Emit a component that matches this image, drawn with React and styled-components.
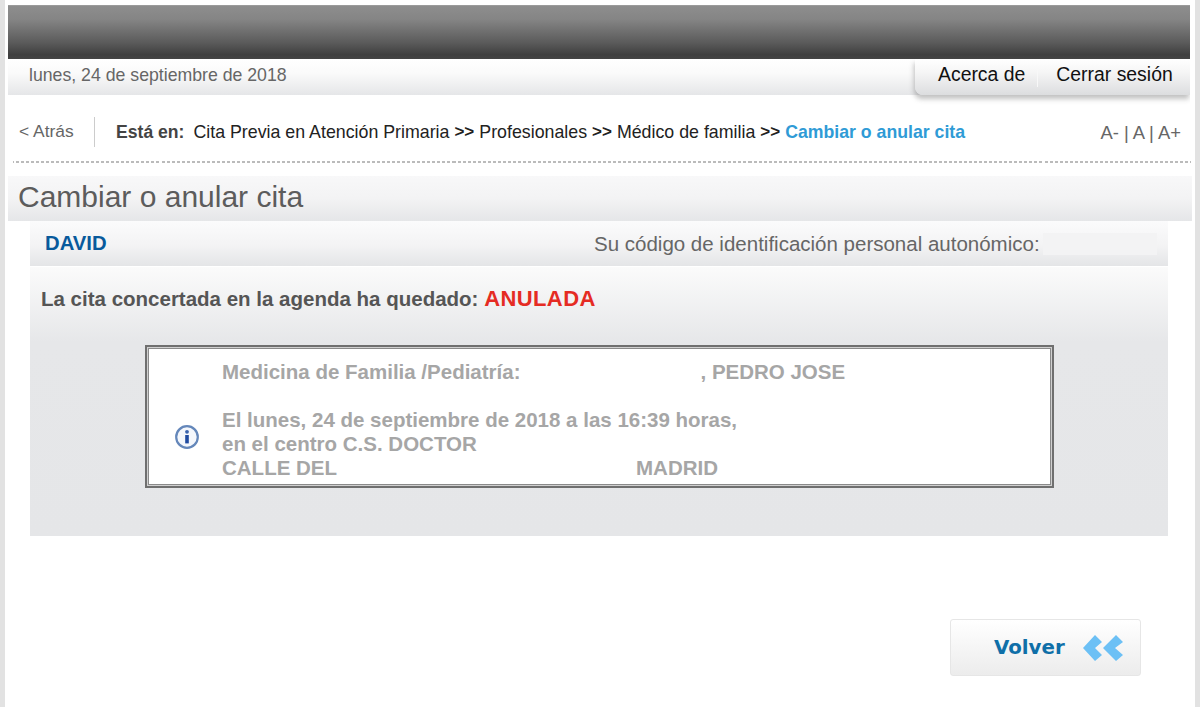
import React from 'react';
import styled, { createGlobalStyle } from 'styled-components';

const GlobalStyle = createGlobalStyle`
    html, body {
        margin: 0;
        padding: 0;
        background: #fff;
        font-family: "Liberation Sans", Arial, sans-serif;
    }
`;

const InfoIcon = () => (
    <svg width="26" height="26" viewBox="0 0 26 26">
        <circle cx="13" cy="13" r="10.8" fill="#f4f7fc" stroke="#6487ba" strokeWidth="2.2" />
        <circle cx="13" cy="7.8" r="1.9" fill="#3a63ad" />
        <rect x="11.2" y="11" width="3.6" height="8.4" fill="#1f4aa0" />
    </svg>
);

const BackArrows = () => (
    <svg width="42" height="28" viewBox="0 0 42 28">
        <polygon points="1,14 13,1 20,8 13,14 20,21 13,27" fill="#6cc0f5" />
        <polygon points="21,14 34,1 41,8 33,14 41,21 34,27" fill="#6cc0f5" />
    </svg>
);

const App = () => (
    <Frame>
        <GlobalStyle />
        <TopBar />
        <SubBar>
            <DateText>lunes, 24 de septiembre de 2018</DateText>
            <Tabs>
                <Tab $divider>Acerca de</Tab>
                <Tab>Cerrar sesión</Tab>
            </Tabs>
        </SubBar>
        <CrumbRow>
            <BackLink>&lt; Atrás</BackLink>
            <Crumbs>
                <CrumbLabel>Está en:</CrumbLabel>
                <span>Cita Previa en Atención Primaria</span>
                <CrumbSep>&gt;&gt;</CrumbSep>
                <span>Profesionales</span>
                <CrumbSep>&gt;&gt;</CrumbSep>
                <span>Médico de familia</span>
                <CrumbSep>&gt;&gt;</CrumbSep>
                <CrumbCurrent>Cambiar o anular cita</CrumbCurrent>
            </Crumbs>
            <FontSizes>A- | A | A+</FontSizes>
        </CrumbRow>
        <TitleBar>Cambiar o anular cita</TitleBar>
        <Panel>
            <UserBar>
                <UserName>DAVID</UserName>
                <IdLabel>Su código de identificación personal autonómico:</IdLabel>
                <Redacted />
            </UserBar>
            <PanelBody>
                <Message>
                    La cita concertada en la agenda ha quedado: <Status>ANULADA</Status>
                </Message>
                <NoticeBox>
                    <NoticeIcon>
                        <InfoIcon />
                    </NoticeIcon>
                    <NoticeText>
                        <NoticeLine $after={24}>
                            Medicina de Familia /Pediatría:<Hidden $width={180} />, PEDRO JOSE
                        </NoticeLine>
                        <NoticeLine>El lunes, 24 de septiembre de 2018 a las 16:39 horas,</NoticeLine>
                        <NoticeLine>en el centro C.S. DOCTOR</NoticeLine>
                        <NoticeLine>
                            CALLE DEL<Hidden $width={299} />MADRID
                        </NoticeLine>
                    </NoticeText>
                </NoticeBox>
            </PanelBody>
        </Panel>
        <Footer>
            <BackButton>
                <BackLabel>Volver</BackLabel>
                <BackArrows />
            </BackButton>
        </Footer>
    </Frame>
);

const Frame = styled.div`
    box-sizing: border-box;
    width: 1200px;
    height: 707px;
    overflow: hidden;
    padding: 5px 5px 0 3px;
    border-left: 5px solid #e2e2e2;
    border-right: 5px solid #e2e2e2;
`;

const TopBar = styled.div`
    box-sizing: border-box;
    width: 1182px;
    height: 54px;
    border-top: 1px solid #9a9a9a;
    background: linear-gradient(#8d8d8d 0%, #858585 25%, #5a5a5a 70%, #3f3f3f 92%, #444 100%);
`;

const SubBar = styled.div`
    display: flex;
    justify-content: space-between;
    width: 1182px;
    height: 36px;
    background: linear-gradient(#fff, #fafafa 40%, #e5e6e8);
`;

const DateText = styled.div`
    padding-left: 21px;
    font-size: 17.7px;
    line-height: 33px;
    color: #666;
`;

const Tabs = styled.div`
    display: flex;
    box-sizing: border-box;
    width: 275px;
    height: 36px;
    padding-left: 23px;
    border-bottom-left-radius: 8px;
    background: linear-gradient(#fff, #f6f6f6 35%, #dcdddf);
    box-shadow: -1px 4px 5px rgba(120, 120, 120, 0.45);
    clip-path: inset(0 0 -12px -8px);
`;

const Tab = styled.div`
    position: relative;
    padding-right: ${p => (p.$divider ? '31px' : '0')};
    font-size: 19.4px;
    line-height: 31px;
    color: #111;

    &::after {
        content: '';
        display: ${p => (p.$divider ? 'block' : 'none')};
        position: absolute;
        right: 18px;
        top: 10px;
        height: 18px;
        width: 1px;
        background: #f8f8f8;
    }
`;

const CrumbRow = styled.div`
    display: flex;
    align-items: center;
    box-sizing: border-box;
    width: 1178px;
    height: 68px;
    margin-left: 5px;
    padding: 9px 10px 0 6px;
    border-bottom: 2px dashed #c4c4c4;
    border-image: repeating-linear-gradient(90deg, #bbb 0 3px, transparent 3px 5px) 2;
`;

const BackLink = styled.div`
    box-sizing: border-box;
    width: 76px;
    height: 30px;
    margin-top: -1px;
    border-right: 1px solid #ccc;
    font-size: 17.4px;
    line-height: 28px;
    color: #666;
`;

const Crumbs = styled.div`
    display: flex;
    flex: 1;
    margin-left: 21px;
    font-size: 17.8px;
    color: #222;
    white-space: nowrap;
`;

const CrumbLabel = styled.strong`
    margin-right: 9px;
    font-size: 17.6px;
    color: #444;
`;

const CrumbSep = styled.strong`
    margin: 0 5px;
    font-size: 17px;
`;

const CrumbCurrent = styled.strong`
    color: #2f9bd6;
    font-size: 17.7px;
`;

const FontSizes = styled.div`
    font-size: 18.4px;
    color: #666;
`;

const TitleBar = styled.h1`
    box-sizing: border-box;
    width: 1184px;
    height: 45px;
    margin: 13px 0 0;
    padding-left: 10px;
    background: linear-gradient(#f8f8f9, #f3f3f4 50%, #e5e6e8);
    font-size: 30px;
    font-weight: normal;
    line-height: 42px;
    color: #5c5c5c;
`;

const Panel = styled.div`
    width: 1138px;
    margin-left: 22px;
`;

const UserBar = styled.div`
    display: flex;
    align-items: center;
    height: 45px;
    background: linear-gradient(#fbfbfc, #f3f3f4 55%, #e4e5e7);
`;

const UserName = styled.div`
    width: 549px;
    padding-left: 15px;
    font-size: 20.3px;
    font-weight: bold;
    color: #085a9c;
`;

const IdLabel = styled.div`
    font-size: 20.5px;
    color: #666;
`;

const Redacted = styled.div`
    width: 114px;
    height: 22px;
    margin-left: 3px;
    background: #f3f3f4;
`;

const PanelBody = styled.div`
    box-sizing: border-box;
    height: 269px;
    margin-top: 1px;
    padding: 21px 0 0 11px;
    background: linear-gradient(#fbfbfb 0, #e6e7e9 75px, #e5e6e8 100%);
`;

const Message = styled.div`
    font-size: 20.5px;
    font-weight: bold;
    line-height: 22px;
    color: #555;
`;

const Status = styled.span`
    font-size: 22px;
    letter-spacing: 0.4px;
    color: #e52b23;
`;

const NoticeBox = styled.div`
    display: flex;
    box-sizing: border-box;
    width: 909px;
    height: 143px;
    margin: 35px 0 0 104px;
    border: 2px solid #6f6f6f;
    background: #fff;
    box-shadow: inset 0 0 0 1px #d0d0d0, inset 0 0 0 2px #8a8a8a;
`;

const NoticeIcon = styled.div`
    display: flex;
    align-items: center;
    box-sizing: border-box;
    width: 75px;
    padding: 41px 0 0 27px;
`;

const NoticeText = styled.div`
    padding-top: 13px;
`;

const NoticeLine = styled.div`
    margin-bottom: ${p => p.$after || 0}px;
    font-size: 20.5px;
    font-weight: bold;
    line-height: 24px;
    color: #a6a6a6;
    white-space: nowrap;
`;

const Hidden = styled.span`
    display: inline-block;
    width: ${p => p.$width}px;
`;

const Footer = styled.div`
    display: flex;
    justify-content: flex-end;
    width: 1133px;
    margin: 83px 0 0 0;
`;

const BackButton = styled.div`
    display: flex;
    align-items: center;
    box-sizing: border-box;
    width: 191px;
    height: 57px;
    padding-left: 43px;
    border: 1px solid #e6e6e6;
    border-radius: 3px;
    background: linear-gradient(#fff, #ececec);
`;

const BackLabel = styled.span`
    width: 88px;
    margin-top: -1px;
    font-family: "DejaVu Sans", sans-serif;
    font-size: 19.8px;
    font-weight: bold;
    color: #0f6fa8;
`;

export default App;
